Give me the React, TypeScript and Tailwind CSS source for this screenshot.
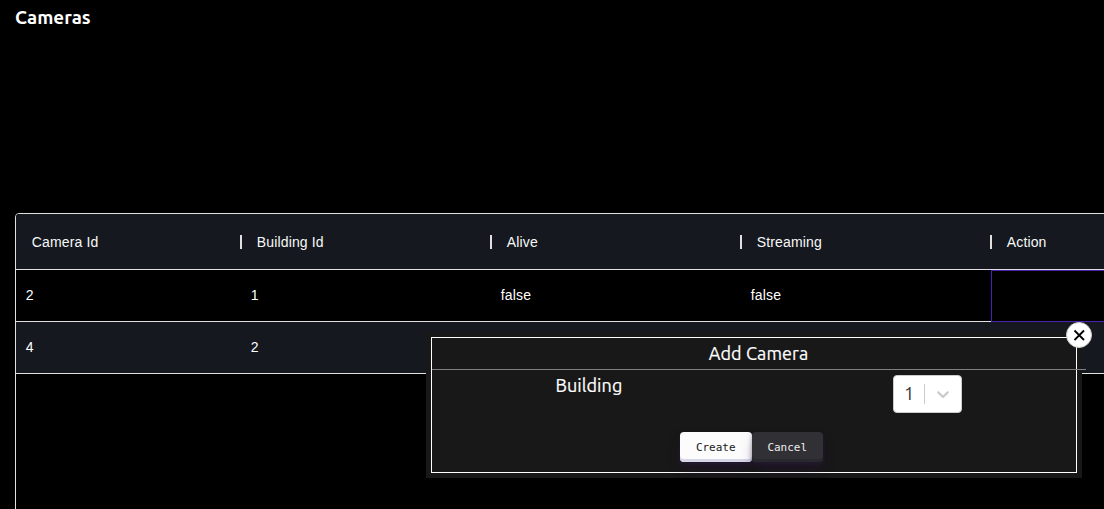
import React from "react";

const columns = [
  { name: "Camera Id", width: "w-[225px]" },
  { name: "Building Id", width: "w-[250px]" },
  { name: "Alive", width: "w-[250px]" },
  { name: "Streaming", width: "w-[250px]" },
  { name: "Action", width: "w-[250px]" },
];

const rows = [
  ["2", "1", "false", "false", ""],
  ["4", "2", "", "", ""],
];

function CameraTable() {
  return (
    <div className="ml-[15px] h-[320px] w-[1240px] shrink-0 rounded-tl-[4px] border border-[#e0e0e0] font-['Liberation_Sans',sans-serif] text-[14px] tracking-[0.14px] text-white">
      <div className="flex h-14 rounded-tl-[3px] border-b border-[#e0e0e0] bg-[#15181f]">
        {columns.map((column, i) => (
          <div key={column.name} className={`flex shrink-0 items-center justify-between pl-[15.8px] pt-px ${column.width}`}>
            <span className="text-[#f8f8f8]">{column.name}</span>
            {i < columns.length - 1 && <span className="-mr-px h-[14px] w-[2px] bg-[#e0e0e0]" />}
          </div>
        ))}
      </div>
      {rows.map((row, r) => (
        <div key={row[0]} className={`flex h-[52px] ${r % 2 ? "bg-[#15181f]" : "bg-black"}`}>
          {row.map((value, i) => (
            <div
              key={columns[i].name}
              className={`flex shrink-0 items-center px-[9.8px] ${columns[i].width} ${
                r === 0 && i === 4 ? "border border-[#4b1fb0]" : "border-b border-[#e0e0e0]"
              }`}
            >
              {value}
            </div>
          ))}
        </div>
      ))}
    </div>
  );
}

function BuildingSelect() {
  return (
    <div className="flex h-[38px] w-[69px] items-center rounded-[4px] border border-[#cccccc] bg-white text-[#333333]">
      <span className="-mt-[2px] w-[30px] pl-[10px] text-[18px] leading-6">1</span>
      <span className="h-5 w-px bg-[#cccccc]" />
      <svg className="ml-2 h-5 w-5 fill-[#cccccc]" viewBox="0 0 20 20" aria-hidden="true">
        <path d="M4.516 7.548c0.436-0.446 1.043-0.481 1.576 0l3.908 3.747 3.908-3.747c0.533-0.481 1.141-0.446 1.574 0 0.436 0.445 0.408 1.197 0 1.615-0.406 0.418-4.695 4.502-4.695 4.502-0.217 0.223-0.502 0.335-0.787 0.335s-0.57-0.112-0.789-0.335c0 0-4.287-4.084-4.695-4.502s-0.436-1.17 0-1.615z" />
      </svg>
    </div>
  );
}

function AddCameraDialog() {
  return (
    <div className="absolute left-[426px] top-[332px] h-[146px] w-[656px] bg-[#181818] p-[5px] font-[Ubuntu,'Noto_Sans',sans-serif] text-[18px] text-white">
      <div className="flex h-[136px] w-[646px] flex-col border border-white">
        <h2 className="h-[31px] pl-[9px] text-center leading-[31px] tracking-[0.08px] [-webkit-text-stroke:0.2px_white]">Add Camera</h2>
        <hr className="w-[654px] border-[#808080]" />
        <div className="flex h-[62px] pt-[5px]">
          <div className="-mt-px w-[461px] pl-[123.4px] leading-[22px] tracking-[0.08px] [-webkit-text-stroke:0.2px_white]">Building</div>
          <BuildingSelect />
        </div>
        <div className="flex pl-[248px] font-['DejaVu_Sans_Mono',monospace] text-[11px] leading-4">
          <button className="h-[30px] w-[71.5px] rounded-[4px] bg-[#fcfcfd] pt-px text-[#181818] shadow-[0_2px_4px_rgba(45,35,66,0.4),0_7px_13px_-3px_rgba(45,15,66,0.5),inset_0_-3px_0_#d6d6e7]">
            Create
          </button>
          <button className="h-[30px] w-[71.5px] rounded-[4px] bg-[#303035] pt-px text-[#eeeeee] shadow-[0_2px_4px_rgba(45,35,66,0.4),0_7px_13px_-3px_rgba(45,15,66,0.5),inset_0_-3px_0_#28282d]">
            Cancel
          </button>
        </div>
      </div>
      <button aria-label="Close" className="absolute -right-[10px] -top-[10px] flex size-[26px] items-center justify-center rounded-full border border-[#cccccc] bg-white">
        <svg className="size-[12px] stroke-black" viewBox="0 0 12 12" fill="none" strokeWidth="1.8" aria-hidden="true">
          <path d="M1.5 1.5l9.5 9.5M11 1.5L1.5 11" />
        </svg>
      </button>
    </div>
  );
}

export default function App() {
  return (
    <main className="relative flex h-[509px] w-full flex-col overflow-hidden bg-black">
      <h1 className="h-[213px] shrink-0 pl-[15px] pt-[6px] font-[Ubuntu,'Noto_Sans',sans-serif] text-[18.72px] font-bold leading-6 text-white">
        Cameras
      </h1>
      <CameraTable />
      <AddCameraDialog />
    </main>
  );
}
